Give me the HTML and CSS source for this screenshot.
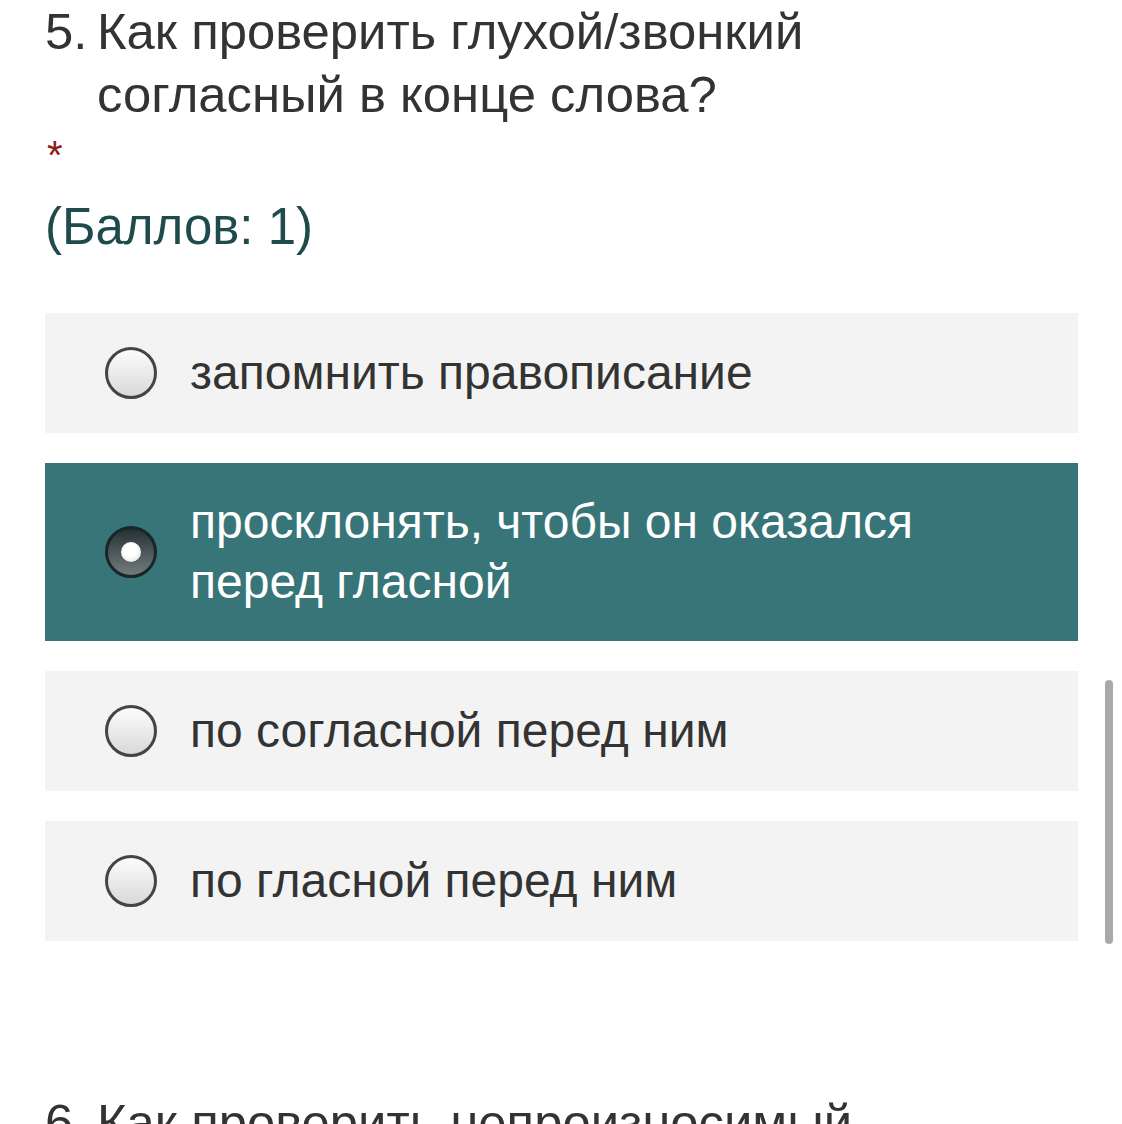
FILE: index.html
```
<!DOCTYPE html>
<html>
	<head>
		<meta charset="utf-8">
		<title>Вопрос 5</title>
		<link rel="stylesheet" href="styles.css">
	</head>
	<body>
		<div class="page">
			<section class="question">
				<h2 class="q-title">
					<span class="q-num">5.</span>
					<span class="q-text">Как проверить глухой/звонкий согласный в конце слова?</span>
				</h2>
				<div class="required">*</div>
				<div class="points">(Баллов: 1)</div>

				<ul class="answers">
					<li class="answer">
						<span class="radio"></span>
						<span class="label">запомнить правописание</span>
					</li>
					<li class="answer checked">
						<span class="radio"></span>
						<span class="label">просклонять, чтобы он оказался перед гласной</span>
					</li>
					<li class="answer">
						<span class="radio"></span>
						<span class="label">по согласной перед ним</span>
					</li>
					<li class="answer">
						<span class="radio"></span>
						<span class="label">по гласной перед ним</span>
					</li>
				</ul>
			</section>

			<section class="question next">
				<h2 class="q-title">
					<span class="q-num">6.</span>
					<span class="q-text">Как проверить непроизносимый</span>
				</h2>
			</section>
		</div>
		<div class="scrollbar"></div>
	</body>
</html>
```

FILE: styles.css
```
* {
	margin: 0;
	padding: 0;
	box-sizing: border-box;
}
html, body {
	height: 100%;
	overflow: hidden;
}
body {
	background: #fff;
	font-family: "Liberation Sans", Arial, sans-serif;
	color: #333;
}
.page {
	padding: 0 44px 0 45px;
}
.q-title {
	display: flex;
	font-weight: normal;
	font-size: 50.8px;
	line-height: 63px;
	color: #333;
}
.q-num {
	flex: 0 0 52px;
}
.q-text {
	flex: 1;
	padding-right: 140px;
}
.required {
	color: #8b1c1c;
	font-size: 40px;
	line-height: 40px;
	height: 59px;
	padding-top: 9px;
	padding-left: 2px;
}
.points {
	font-size: 51px;
	line-height: 63px;
	color: #1f4b4d;
	margin-top: 10px;
}
.answers {
	list-style: none;
	margin-top: 55px;
	display: flex;
	flex-direction: column;
	gap: 30px;
}
.answer {
	display: flex;
	align-items: center;
	min-height: 120px;
	padding: 29px 60px 29px 60px;
	background: #f3f3f3;
	font-size: 48px;
	line-height: 60px;
	color: #333;
}
.answer.checked {
	background: #377579;
	color: #fff;
}
.radio {
	flex: 0 0 52px;
	height: 52px;
	border-radius: 50%;
	border: 3px solid #444;
	background: linear-gradient(#fcfcfc, #d9d9d9);
	margin-right: 33px;
	position: relative;
}
.checked .radio {
	border-color: #182628;
	background: linear-gradient(#263133, #737b7d);
}
.checked .radio:after {
	content: "";
	position: absolute;
	left: 50%;
	top: 50%;
	width: 20px;
	height: 20px;
	margin: -10px 0 0 -10px;
	border-radius: 50%;
	background: radial-gradient(circle at 45% 40%, #fff 40%, #d8d8d8);
}
.next {
	margin-top: 150px;
}
.scrollbar {
	position: absolute;
	left: 1105px;
	top: 680px;
	width: 8px;
	height: 264px;
	border-radius: 4px;
	background: #a9a9a9;
}
```
